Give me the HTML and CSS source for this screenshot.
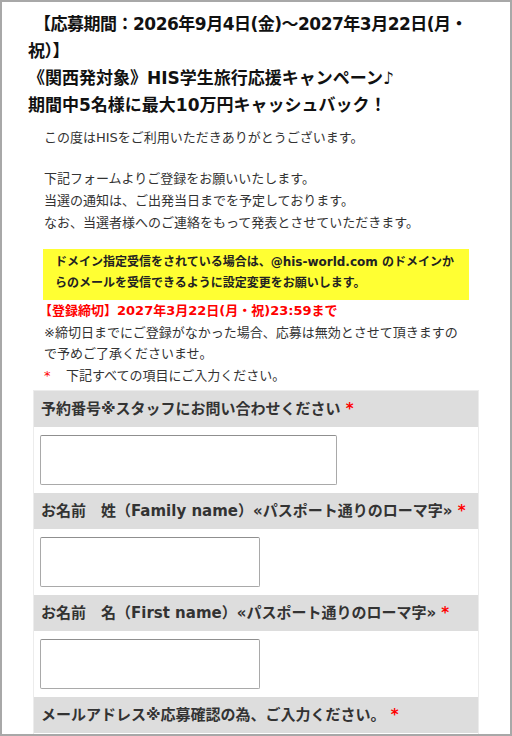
FILE: index.html
```html
<!DOCTYPE html>
<html lang="ja">
<head>
<meta charset="utf-8">
<title>応募フォーム</title>
<link rel="stylesheet" href="styles.css">
</head>
<body>
<div class="frame">
  <h1 class="title"><span class="period">【応募期間：2026年9月4日(金)～2027年3月22日(月・祝）】</span><br>《関西発対象》HIS学生旅行応援キャンペーン♪<br>期間中5名様に最大10万円キャッシュバック！</h1>
  <div class="content">
    <p class="intro">この度はHISをご利用いただきありがとうございます。</p>
    <p class="intro">下記フォームよりご登録をお願いいたします。<br>当選の通知は、ご出発当日までを予定しております。<br>なお、当選者様へのご連絡をもって発表とさせていただきます。</p>
    <div class="notice">ドメイン指定受信をされている場合は、@his-world.com のドメインからのメールを受信できるように設定変更をお願いします。</div>
    <p class="deadline">【登録締切】2027年3月22日(月・祝)23:59まで</p>
    <p class="note">※締切日までにご登録がなかった場合、応募は無効とさせて頂きますので予めご了承くださいませ。</p>
    <p class="note"><span class="star">*</span>下記すべての項目にご入力ください。</p>
  </div>
  <div class="form">
    <div class="label">予約番号※スタッフにお問い合わせください <span class="req">*</span></div>
    <div class="field"><span class="input wide"></span></div>
    <div class="label">お名前　姓（Family name）«パスポート通りのローマ字» <span class="req">*</span></div>
    <div class="field"><span class="input"></span></div>
    <div class="label">お名前　名（First name）«パスポート通りのローマ字» <span class="req">*</span></div>
    <div class="field"><span class="input"></span></div>
    <div class="label">メールアドレス※応募確認の為、ご入力ください。 <span class="req">*</span></div>
    <div class="field"><span class="input wide"></span></div>
  </div>
</div>
</body>
</html>
```
FILE: styles.css
```css
* { box-sizing: border-box; }
html, body { margin: 0; padding: 0; background: #fff; }
body {
  font-family: "DejaVu Sans", "Noto Sans CJK JP", sans-serif;
  color: #333;
}
.frame {
  width: 512px;
  height: 736px;
  border: 2px solid #a8a8a8;
  overflow: hidden;
}
.title {
  margin: 0;
  padding: 9px 22px 0 26px;
  font-size: 17px;
  line-height: 27px;
  font-weight: bold;
  color: #111;
  text-indent: 6px;
}
.period { letter-spacing: -0.5px; }
.content {
  margin: 8px 0 0 41px;
  width: 426px;
}
.intro {
  margin: 0 0 19px 1px;
  font-size: 13px;
  line-height: 22px;
}
.intro + .intro { margin-bottom: 15px; }
.notice {
  background: #ffff33;
  padding: 3px 12px 6px 12px;
  font-size: 12px;
  line-height: 21px;
  font-weight: bold;
  color: #222;
}
.deadline {
  margin: 0;
  font-size: 13px;
  line-height: 21.5px;
  font-weight: bold;
  color: #ff0000;
  text-indent: -4px;
}
.note {
  margin: 0 0 0 1px;
  font-size: 13px;
  line-height: 21.5px;
}
.star {
  display: inline-block;
  width: 22px;
  color: #ff0000;
}
.form {
  margin: 4px 0 0 31px;
  width: 446px;
  border: 1px solid #ececec;
  border-bottom: 0;
}
.label {
  height: 36px;
  padding-left: 7px;
  background: #dddddd;
  font-size: 15px;
  line-height: 36px;
  font-weight: bold;
  color: #333;
  white-space: nowrap;
}
.req { color: #ff0000; }
.field {
  height: 66px;
  padding: 8px 6px;
  background: #fff;
}
.input {
  display: block;
  width: 220px;
  height: 50px;
  border: 1px solid #a9a9a9;
  border-top-color: #8f8f8f;
  border-radius: 2px;
  background: #fff;
}
.input.wide { width: 297px; }
```
